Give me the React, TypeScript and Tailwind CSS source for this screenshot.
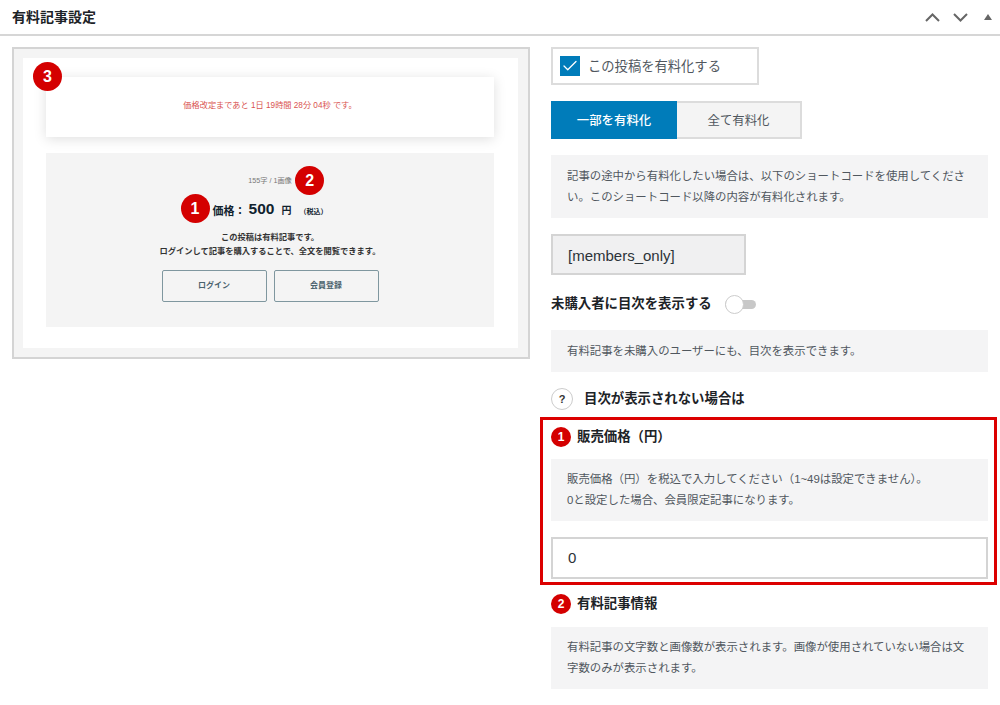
import { Check } from "lucide-react";

const font = "font-['Liberation_Sans','Noto_Sans_CJK_JP',sans-serif]";

function Badge({ n }: { n: number }) {
  return (
    <span className="flex h-5 w-5 shrink-0 items-center justify-center rounded-full bg-[#d40000] text-[12px] font-bold text-white">
      {n}
    </span>
  );
}

function BigBadge({ n, className }: { n: number; className: string }) {
  return (
    <span
      className={`absolute flex h-[29px] w-[29px] items-center justify-center rounded-full bg-[#d40000] text-[16px] font-bold text-white ${className}`}
    >
      {n}
    </span>
  );
}

function Info({ children, className = "" }: { children: React.ReactNode; className?: string }) {
  return (
    <div className={`bg-[#f4f4f5] px-4 text-[11.4px] leading-[21px] text-[#50575e] ${className}`}>
      {children}
    </div>
  );
}

function Preview() {
  return (
    <div className="h-[312px] w-[518px] shrink-0 border-2 border-[#d4d4d4] bg-[#f4f4f4] py-[9px] pl-[9px] pr-[10px]">
      <div className="relative h-[290px] bg-white pl-[23px] pr-[24px] pt-[19px]">
        <BigBadge n={3} className="left-[10px] top-[4px]" />
        <div className="flex h-[60px] items-center justify-center bg-white pb-[1px] text-[8.2px] text-[#d9534f] shadow-[0_2px_12px_rgba(0,0,0,0.13)]">
          価格改定まであと 1日 19時間 28分 04秒 です。
        </div>
        <div className="mt-4 flex h-[174px] flex-col items-center bg-[#f4f4f4] pt-[23px]">
          <div className="relative flex h-[10px] items-center text-[7.2px] text-[#777]">
            155字 / 1画像
            <BigBadge n={2} className="left-[47px] top-[-10px]" />
          </div>
          <div className="relative mt-[13px] flex h-[20px] items-end font-bold text-[#10222e]">
            <BigBadge n={1} className="left-[-32px] top-[-5px]" />
            <span className="text-[11px] leading-[16px]">価格：</span>
            <span className="ml-[3px] text-[15.5px] leading-[20px]">500</span>
            <span className="ml-[7px] text-[10px] leading-[16px]">円</span>
            <span className="ml-[8px] text-[7px] leading-[15px]">（税込）</span>
          </div>
          <div className="mt-[12px] text-center text-[8.25px] font-bold leading-[13.5px] text-[#333]">
            この投稿は有料記事です。
            <br />
            ログインして記事を購入することで、全文を閲覧できます。
          </div>
          <div className="mt-[12px] flex gap-[7px]">
            <div className="flex h-8 w-[105px] items-center justify-center rounded-[2px] border-[1.5px] border-[#7f979f] text-[8px] font-bold text-[#4a626d]">
              ログイン
            </div>
            <div className="flex h-8 w-[105px] items-center justify-center rounded-[2px] border-[1.5px] border-[#7f979f] text-[8px] font-bold text-[#4a626d]">
              会員登録
            </div>
          </div>
        </div>
      </div>
    </div>
  );
}

export default function App() {
  return (
    <div className={`h-[705px] w-[1000px] overflow-hidden bg-white ${font}`}>
      <header className="flex h-9 items-center justify-between border-b-2 border-[#d6d6d6] pl-3 pr-[8px]">
        <h2 className="text-[14px] font-bold text-[#1d2327]">有料記事設定</h2>
        <div className="flex items-center gap-[13px] text-[#666]">
          <svg width="15" height="9" viewBox="0 0 15 9" fill="none" stroke="currentColor" strokeWidth="2">
            <path d="M1 8l6.5-6.5L14 8" />
          </svg>
          <svg width="15" height="9" viewBox="0 0 15 9" fill="none" stroke="currentColor" strokeWidth="2">
            <path d="M1 1l6.5 6.5L14 1" />
          </svg>
          <svg width="8" height="6" viewBox="0 0 8 6" fill="currentColor" className="ml-[3px]">
            <path d="M4 0L8 6H0z" />
          </svg>
        </div>
      </header>

      <div className="flex pl-3 pt-[11px]">
        <Preview />
        <div className="ml-[21px] w-[437px]">
          <div className="flex h-[38px] w-[208px] items-center border-2 border-[#dcdcdc] pl-[7px] text-[13.3px] text-[#50575e]">
            <span className="mr-2 flex h-5 w-5 items-center justify-center bg-[#007cba]">
              <Check size={18} strokeWidth={1.75} className="text-white" />
            </span>
            <span className="pt-[2px]">この投稿を有料化する</span>
          </div>

          <div className="mt-[16px] flex h-[38px] w-[251px] text-[12.4px]">
            <div className="flex w-[126px] items-center justify-center bg-[#007cba] pt-[2px] font-medium text-white">
              一部を有料化
            </div>
            <div className="flex flex-1 items-center justify-center border-2 border-l-0 border-[#dcdcdc] bg-[#f4f4f4] pt-[2px] text-[#50575e]">
              全て有料化
            </div>
          </div>

          <Info className="mt-[16px] h-[63px] pt-[11px]">
            記事の途中から有料化したい場合は、以下のショートコードを使用してください。このショートコード以降の内容が有料化されます。
          </Info>

          <div className="mt-[16px] flex h-[41px] w-[195px] items-center border-2 border-[#d4d4d4] bg-[#f0f0f1] pl-[15px] pt-[3px] text-[15px] text-[#2c3338]">
            [members_only]
          </div>

          <div className="mt-[19px] flex h-[20px] items-center text-[13.4px] font-bold text-[#1d2327]">
            未購入者に目次を表示する
            <span className="relative ml-[13px] h-[9px] w-[31px] rounded-full bg-[#c8c8c8]">
              <span className="absolute left-0 top-[-5px] h-[19px] w-[19px] rounded-full border border-[#ccc] bg-white" />
            </span>
          </div>

          <Info className="mt-[16px] flex h-[42px] items-center">
            有料記事を未購入のユーザーにも、目次を表示できます。
          </Info>

          <div className="mt-[16px] flex h-[22px] items-center text-[13.4px] font-bold text-[#1d2327]">
            <span className="mr-[11px] flex h-[22px] w-[22px] items-center justify-center rounded-full border border-[#ccc] text-[11px] text-[#333]">
              ?
            </span>
            目次が表示されない場合は
          </div>

          <div className="ml-[-11px] mr-[-9px] mt-[7px] h-[168px] border-[3px] border-[#dc0000] pl-[8px] pr-[6px] pt-[7px]">
            <div className="flex h-[20px] items-center gap-[6px] text-[13.4px] font-bold text-[#1d2327]">
              <Badge n={1} />
              販売価格（円）
            </div>
            <Info className="mt-[12px] h-[62px] py-[10px]">
              販売価格（円）を税込で入力してください（1~49は設定できません）。
              <br />
              0と設定した場合、会員限定記事になります。
            </Info>
            <div className="mt-[16px] flex h-[42px] items-center border-2 border-[#d4d4d4] bg-white pl-[15px] text-[15px] text-[#2c3338]">
              0
            </div>
          </div>

          <div className="mt-[9px] flex h-[20px] items-center gap-[6px] text-[13.4px] font-bold text-[#1d2327]">
            <Badge n={2} />
            有料記事情報
          </div>
          <Info className="mt-[13px] h-[62px] py-[10px]">
            有料記事の文字数と画像数が表示されます。画像が使用されていない場合は文字数のみが表示されます。
          </Info>
        </div>
      </div>
    </div>
  );
}
